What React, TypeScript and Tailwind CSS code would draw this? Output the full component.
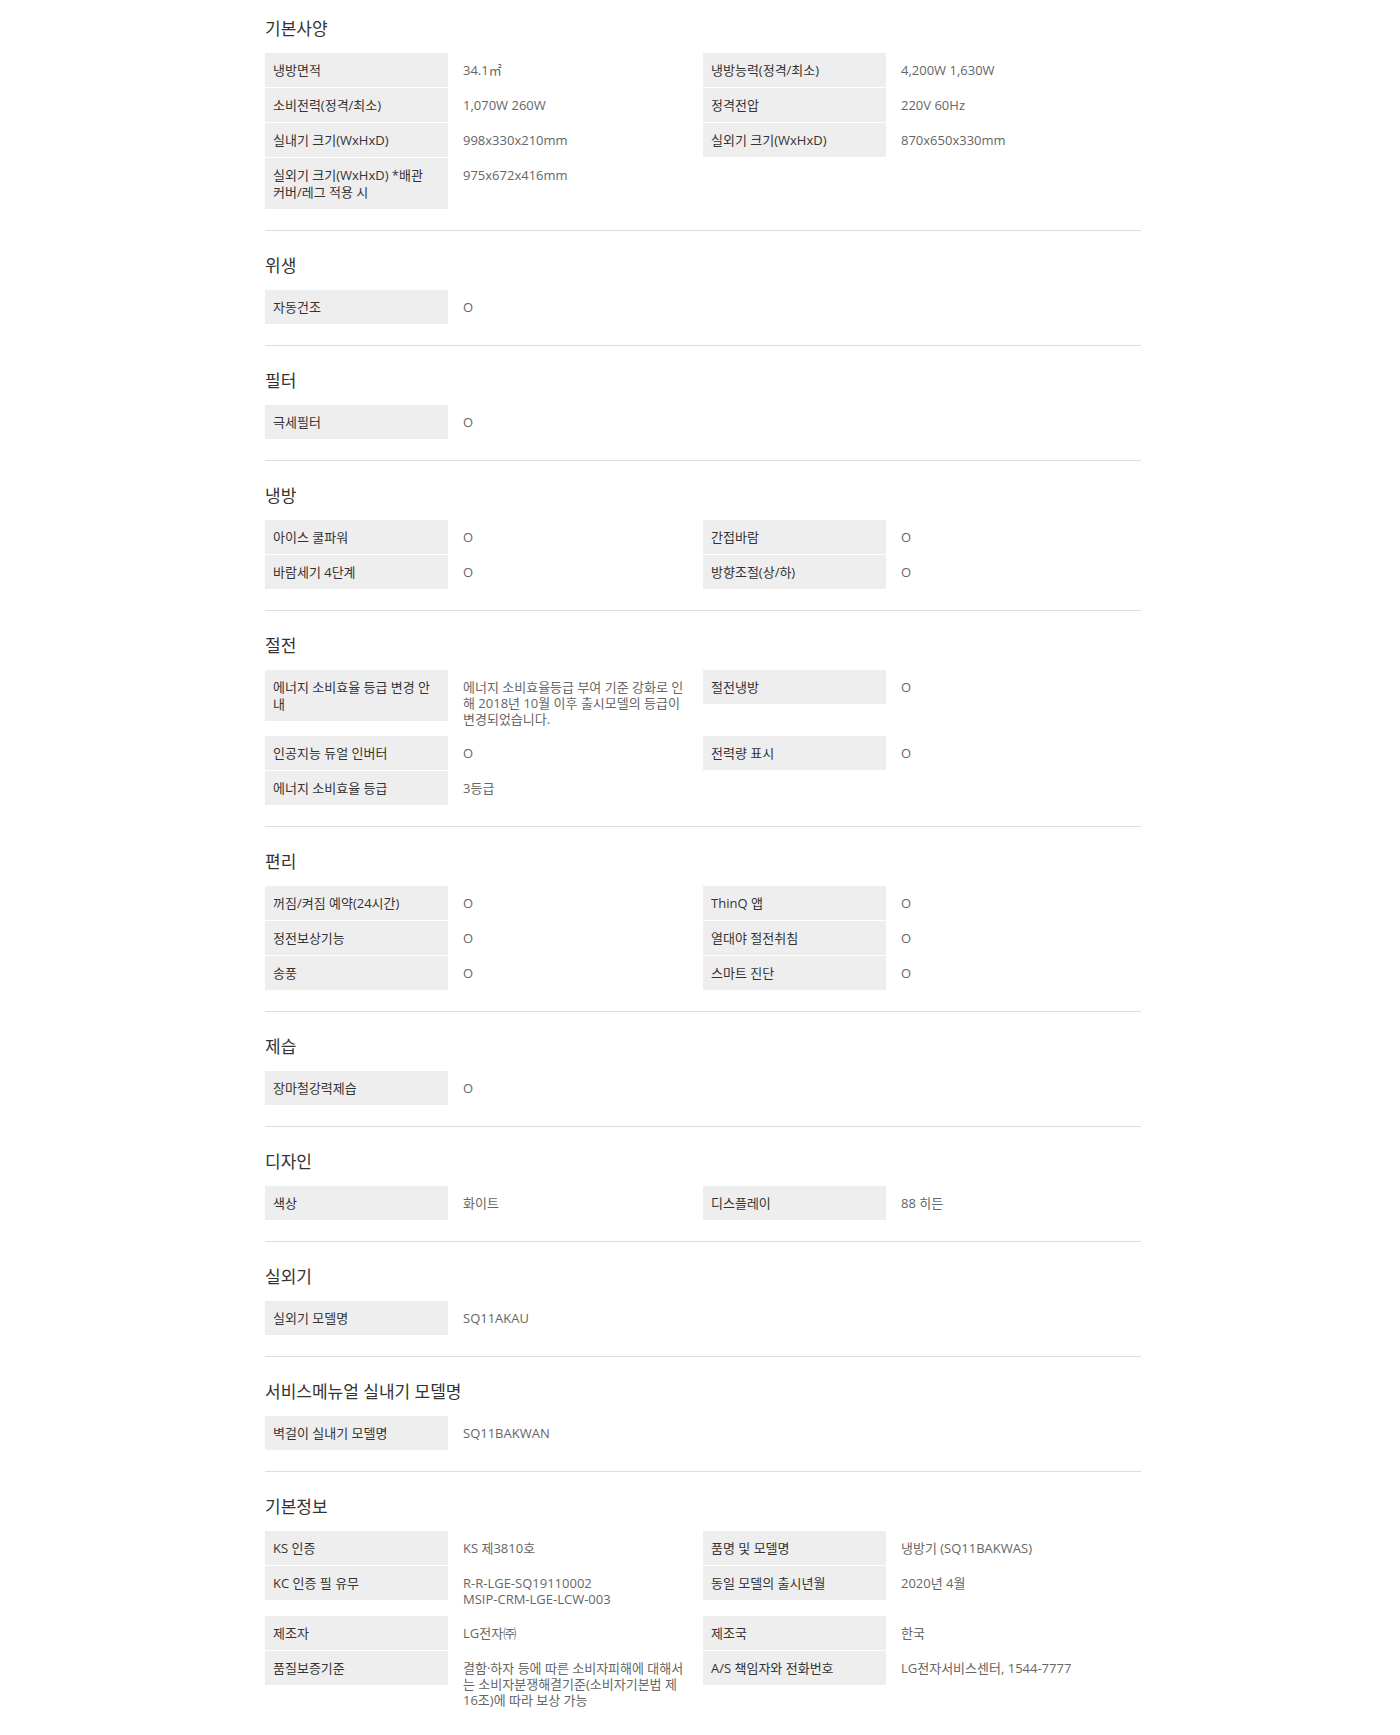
import React from 'react';

type Pair = [string, string] | null;
type Section = { title: string; rows: [Pair, Pair][] };

const sections: Section[] = [
  {
    title: '기본사양',
    rows: [
      [['냉방면적', '34.1㎡'], ['냉방능력(정격/최소)', '4,200W 1,630W']],
      [['소비전력(정격/최소)', '1,070W 260W'], ['정격전압', '220V 60Hz']],
      [['실내기 크기(WxHxD)', '998x330x210mm'], ['실외기 크기(WxHxD)', '870x650x330mm']],
      [['실외기 크기(WxHxD) *배관 커버/레그 적용 시', '975x672x416mm'], null],
    ],
  },
  { title: '위생', rows: [[['자동건조', 'O'], null]] },
  { title: '필터', rows: [[['극세필터', 'O'], null]] },
  {
    title: '냉방',
    rows: [
      [['아이스 쿨파워', 'O'], ['간접바람', 'O']],
      [['바람세기 4단계', 'O'], ['방향조절(상/하)', 'O']],
    ],
  },
  {
    title: '절전',
    rows: [
      [
        [
          '에너지 소비효율 등급 변경 안내',
          '에너지 소비효율등급 부여 기준 강화로 인해 2018년 10월 이후 출시모델의 등급이 변경되었습니다.',
        ],
        ['절전냉방', 'O'],
      ],
      [['인공지능 듀얼 인버터', 'O'], ['전력량 표시', 'O']],
      [['에너지 소비효율 등급', '3등급'], null],
    ],
  },
  {
    title: '편리',
    rows: [
      [['꺼짐/켜짐 예약(24시간)', 'O'], ['ThinQ 앱', 'O']],
      [['정전보상기능', 'O'], ['열대야 절전취침', 'O']],
      [['송풍', 'O'], ['스마트 진단', 'O']],
    ],
  },
  { title: '제습', rows: [[['장마철강력제습', 'O'], null]] },
  { title: '디자인', rows: [[['색상', '화이트'], ['디스플레이', '88 히든']]] },
  { title: '실외기', rows: [[['실외기 모델명', 'SQ11AKAU'], null]] },
  { title: '서비스메뉴얼 실내기 모델명', rows: [[['벽걸이 실내기 모델명', 'SQ11BAKWAN'], null]] },
  {
    title: '기본정보',
    rows: [
      [['KS 인증', 'KS 제3810호'], ['품명 및 모델명', '냉방기 (SQ11BAKWAS)']],
      [['KC 인증 필 유무', 'R-R-LGE-SQ19110002\nMSIP-CRM-LGE-LCW-003'], ['동일 모델의 출시년월', '2020년 4월']],
      [['제조자', 'LG전자㈜'], ['제조국', '한국']],
      [
        [
          '품질보증기준',
          '결함·하자 등에 따른 소비자피해에 대해서는 소비자분쟁해결기준(소비자기본법 제16조)에 따라 보상 가능',
        ],
        ['A/S 책임자와 전화번호', 'LG전자서비스센터, 1544-7777'],
      ],
    ],
  },
];

const SpecCell = ({ item }: { item: Pair }) => {
  if (!item) return <div />;
  return (
    <div className="flex items-start">
      <div className="w-[183px] shrink-0 bg-[#eeeeee] pl-2 pr-3 pt-[9px] pb-2 leading-[17px] text-[#333333]">
        {item[0]}
      </div>
      <div className="flex-1 pl-[15px] pr-[15px] pt-[9px] pb-2 leading-4 text-[#666666] whitespace-pre-line">
        {item[1]}
      </div>
    </div>
  );
};

export default function App() {
  return (
    <div className="min-h-[1735px] bg-white font-['Open_Sans','Noto_Sans_CJK_KR',sans-serif]">
      <div className="ml-[265px] w-[876px] pt-[17px]">
        {sections.map((section, i) => (
          <div
            key={section.title}
            className={
              i === sections.length - 1
                ? 'pt-[23px] pb-[21px]'
                : i === 0
                  ? 'pb-[21px] border-b border-[#dddddd]'
                  : 'pt-[23px] pb-[21px] border-b border-[#dddddd]'
            }
          >
            <h3 className="text-[17px] leading-6 text-[#333333]">{section.title}</h3>
            <div className="mt-3 flex flex-col gap-px text-[13px]">
              {section.rows.map((row, j) => (
                <div key={j} className="grid grid-cols-2">
                  <SpecCell item={row[0]} />
                  <SpecCell item={row[1]} />
                </div>
              ))}
            </div>
          </div>
        ))}
      </div>
    </div>
  );
}
